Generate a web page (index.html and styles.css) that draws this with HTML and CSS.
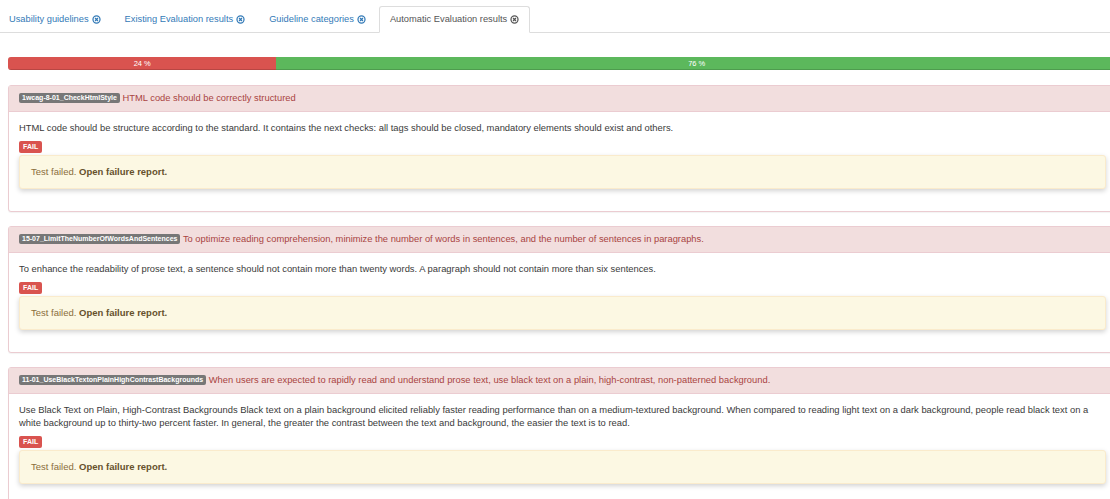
FILE: index.html
```html
<!DOCTYPE html>
<html lang="en">
<head>
<meta charset="utf-8">
<title>Automatic Evaluation results</title>
<link rel="stylesheet" href="styles.css">
</head>
<body>
<div class="page">
  <ul class="tabs">
    <li class="tab"><a href="#">Usability guidelines <svg class="close-icon" viewBox="0 0 10 10"><circle cx="5" cy="5" r="3.9"/><path d="M3.4 3.4 L6.6 6.6 M6.6 3.4 L3.4 6.6"/></svg></a></li>
    <li class="tab"><a href="#">Existing Evaluation results <svg class="close-icon" viewBox="0 0 10 10"><circle cx="5" cy="5" r="3.9"/><path d="M3.4 3.4 L6.6 6.6 M6.6 3.4 L3.4 6.6"/></svg></a></li>
    <li class="tab"><a href="#">Guideline categories <svg class="close-icon" viewBox="0 0 10 10"><circle cx="5" cy="5" r="3.9"/><path d="M3.4 3.4 L6.6 6.6 M6.6 3.4 L3.4 6.6"/></svg></a></li>
    <li class="tab active"><a href="#">Automatic Evaluation results <svg class="close-icon" viewBox="0 0 10 10"><circle cx="5" cy="5" r="3.9"/><path d="M3.4 3.4 L6.6 6.6 M6.6 3.4 L3.4 6.6"/></svg></a></li>
  </ul>

  <div class="progress">
    <div class="bar bar-fail" style="width:24.2%">24 %</div>
    <div class="bar bar-pass" style="width:75.8%">76 %</div>
  </div>

  <div class="panel">
    <div class="panel-heading">
      <span class="code">1wcag-8-01_CheckHtmlStyle</span> HTML code should be correctly structured
    </div>
    <div class="panel-body">
      <p class="desc">HTML code should be structure according to the standard. It contains the next checks: all tags should be closed, mandatory elements should exist and others.</p>
      <span class="status">FAIL</span>
      <div class="alert">Test failed. <a href="#" class="alert-link">Open failure report.</a></div>
    </div>
  </div>

  <div class="panel">
    <div class="panel-heading">
      <span class="code">15-07_LimitTheNumberOfWordsAndSentences</span> To optimize reading comprehension, minimize the number of words in sentences, and the number of sentences in paragraphs.
    </div>
    <div class="panel-body">
      <p class="desc">To enhance the readability of prose text, a sentence should not contain more than twenty words. A paragraph should not contain more than six sentences.</p>
      <span class="status">FAIL</span>
      <div class="alert">Test failed. <a href="#" class="alert-link">Open failure report.</a></div>
    </div>
  </div>

  <div class="panel">
    <div class="panel-heading">
      <span class="code">11-01_UseBlackTextonPlainHighContrastBackgrounds</span> When users are expected to rapidly read and understand prose text, use black text on a plain, high-contrast, non-patterned background.
    </div>
    <div class="panel-body">
      <p class="desc">Use Black Text on Plain, High-Contrast Backgrounds Black text on a plain background elicited reliably faster reading performance than on a medium-textured background. When compared to reading light text on a dark background, people read black text on a white background up to thirty-two percent faster. In general, the greater the contrast between the text and background, the easier the text is to read.</p>
      <span class="status">FAIL</span>
      <div class="alert">Test failed. <a href="#" class="alert-link">Open failure report.</a></div>
    </div>
  </div>
</div>
</body>
</html>
```

FILE: styles.css
```css
html, body {
  margin: 0;
  padding: 0;
  overflow: hidden;
  background: #fff;
}

body {
  font-family: "Liberation Sans", Arial, sans-serif;
  font-size: 9.4px;
  line-height: 13px;
  color: #3a3a3a;
}

.page {
  width: 1109px;
  padding-left: 8px;
}

/* Tabs */
.tabs {
  list-style: none;
  margin: 0 0 0 -10px;
  padding: 6px 0 0 0;
  display: flex;
  border-bottom: 1px solid #ddd;
}

.tab {
  margin-right: 2px;
  margin-bottom: -1px;
}

.tab a {
  display: flex;
  align-items: center;
  gap: 3px;
  padding: 6px 10px;
  font-size: 9.3px;
  line-height: 13px;
  border: 1px solid transparent;
  border-radius: 3px 3px 0 0;
  color: #337ab7;
  text-decoration: none;
}

.tab.active a {
  color: #555;
  background: #fff;
  border-color: #ddd;
  border-bottom-color: transparent;
}

.close-icon {
  width: 9px;
  height: 9px;
  fill: none;
  stroke: currentColor;
  stroke-width: 1.4;
}

/* Progress */
.progress {
  display: flex;
  height: 13px;
  margin: 24px 0 15px;
  border-radius: 3px;
  overflow: hidden;
  background: #f5f5f5;
  box-shadow: inset 0 1px 2px rgba(0, 0, 0, 0.1);
}

.bar {
  color: #fff;
  font-size: 7.5px;
  line-height: 13px;
  text-align: center;
  box-shadow: inset 0 -1px 0 rgba(0, 0, 0, 0.15);
}

.bar-fail { background: #d9534f; }
.bar-pass { background: #5cb85c; }

/* Panels */
.panel {
  border: 1px solid #ebccd1;
  border-radius: 3px;
  margin-bottom: 14px;
  background: #fff;
  box-shadow: 0 1px 1px rgba(0, 0, 0, 0.05);
}

.panel-heading {
  background: #f2dede;
  color: #a94442;
  border-bottom: 1px solid #ebccd1;
  padding: 6px 10px;
  font-size: 9.35px;
  line-height: 13px;
}

.code {
  display: inline-block;
  background: #777;
  color: #fff;
  font-size: 7px;
  font-weight: bold;
  line-height: 1;
  padding: 1px 3px 1.5px;
  border-radius: 2px;
  vertical-align: 1px;
}

.panel-body {
  padding: 9px 10px 10px;
}

.desc {
  margin: 0 0 7px;
}

.status {
  display: inline-block;
  background: #d9534f;
  color: #fff;
  font-size: 7px;
  font-weight: bold;
  line-height: 1;
  padding: 2px 4px 2.5px;
  border-radius: 2px;
  vertical-align: top;
}

.alert {
  margin: 1px 0 12px;
  padding: 9px 11px 10px;
  background: #fcf8e3;
  border: 1px solid #faebcc;
  border-radius: 3px;
  color: #8a6d3b;
  font-size: 9.5px;
  box-shadow: 0 2px 5px rgba(0, 0, 0, 0.18);
}

.alert-link {
  color: #66512c;
  font-weight: bold;
  text-decoration: none;
}
```
